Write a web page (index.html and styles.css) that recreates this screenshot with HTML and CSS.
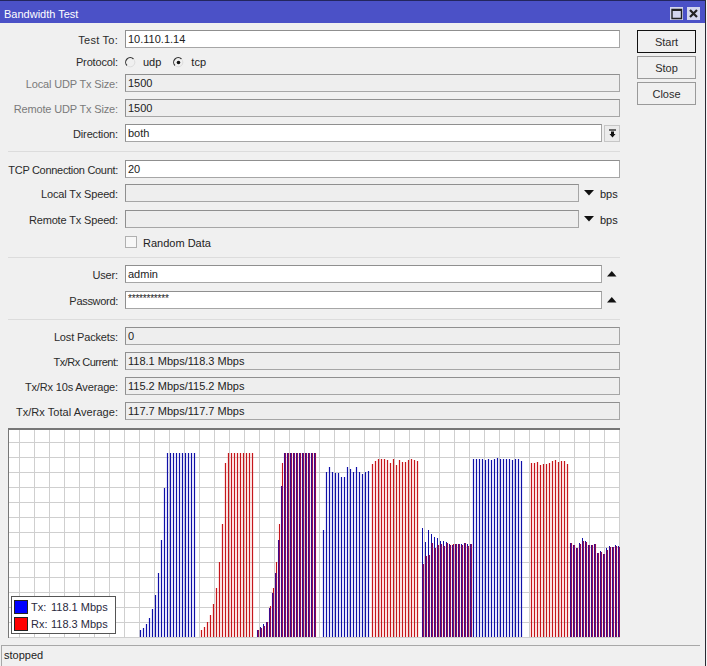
FILE: index.html
```html
<!DOCTYPE html>
<html lang="en">
<head>
<meta charset="utf-8">
<title>Bandwidth Test</title>
<link rel="stylesheet" href="styles.css">
</head>
<body>
<div class="window">
  <header class="titlebar">
    <span class="title">Bandwidth Test</span>
    <div class="win-buttons">
      <span class="win-btn"><svg width="13" height="13" viewBox="0 0 13 13"><path d="M2 2.5H11.5V11.5H2Z" fill="none" stroke="#222" stroke-width="1.4"/><path d="M2 3H11.5" stroke="#222" stroke-width="2"/></svg></span>
      <span class="win-btn"><svg width="13" height="13" viewBox="0 0 13 13"><path d="M3 3L10 10M10 3L3 10" stroke="#222" stroke-width="2.2"/></svg></span>
    </div>
  </header>
  <div class="content">
    <main class="form">
      <section class="group group-a">
        <div class="row"><label class="lbl wide">Test To:</label><div class="field">10.110.1.14</div></div>
        <div class="row row-short"><label class="lbl">Protocol:</label>
          <div class="radios">
            <span class="radio"><svg width="11" height="11" viewBox="0 0 11 11"><path d="M8.5 2A4.3 4.3 0 0 0 2 8.5" fill="none" stroke="#333" stroke-width="1.1"/><path d="M2 8.5A4.3 4.3 0 0 0 8.5 2" fill="none" stroke="#ddd" stroke-width="1"/></svg>udp</span>
            <span class="radio"><svg width="11" height="11" viewBox="0 0 11 11"><path d="M8.5 2A4.3 4.3 0 0 0 2 8.5" fill="none" stroke="#333" stroke-width="1.1"/><path d="M2 8.5A4.3 4.3 0 0 0 8.5 2" fill="none" stroke="#ddd" stroke-width="1"/><circle cx="5.5" cy="5.5" r="1.8" fill="#111"/></svg>tcp</span>
          </div>
        </div>
        <div class="row"><label class="lbl dim">Local UDP Tx Size:</label><div class="field off">1500</div></div>
        <div class="row"><label class="lbl dim">Remote UDP Tx Size:</label><div class="field off">1500</div></div>
        <div class="row"><label class="lbl">Direction:</label><div class="field tight">both</div>
          <span class="drop"><svg width="9" height="9" viewBox="0 0 9 9"><path d="M1 1H8" stroke="#111" stroke-width="1.2"/><path d="M1.5 5H3V2.5H6V5H7.5L4.5 8.5Z" fill="#111"/></svg></span>
        </div>
      </section>
      <hr class="sep">
      <section class="group group-b">
        <div class="row row-lead"><label class="lbl narrow">TCP Connection Count:</label><div class="field">20</div></div>
        <div class="row"><label class="lbl">Local Tx Speed:</label><div class="field off"></div>
          <svg class="arrow-down" width="11" height="6" viewBox="0 0 11 6"><path d="M0 0H10L5 5.5Z" fill="#111"/></svg><span class="unit">bps</span></div>
        <div class="row"><label class="lbl">Remote Tx Speed:</label><div class="field off"></div>
          <svg class="arrow-down" width="11" height="6" viewBox="0 0 11 6"><path d="M0 0H10L5 5.5Z" fill="#111"/></svg><span class="unit">bps</span></div>
        <div class="row row-short"><span class="lbl"></span><span class="check"></span><span class="check-text">Random Data</span></div>
      </section>
      <hr class="sep sep-b">
      <section class="group group-b">
        <div class="row"><label class="lbl">User:</label><div class="field tight">admin</div>
          <svg class="arrow-up" width="10" height="6" viewBox="0 0 10 6"><path d="M0 5.5H9.5L4.8 0Z" fill="#111"/></svg></div>
        <div class="row"><label class="lbl narrow">Password:</label><div class="field tight stars">***********</div>
          <svg class="arrow-up" width="10" height="6" viewBox="0 0 10 6"><path d="M0 5.5H9.5L4.8 0Z" fill="#111"/></svg></div>
      </section>
      <hr class="sep sep-c">
      <section class="group group-a">
        <div class="row"><label class="lbl">Lost Packets:</label><div class="field off">0</div></div>
        <div class="row"><label class="lbl tightest">Tx/Rx Current:</label><div class="field off">118.1 Mbps/118.3 Mbps</div></div>
        <div class="row"><label class="lbl">Tx/Rx 10s Average:</label><div class="field off">115.2 Mbps/115.2 Mbps</div></div>
        <div class="row"><label class="lbl plain">Tx/Rx Total Average:</label><div class="field off">117.7 Mbps/117.7 Mbps</div></div>
      </section>
      <div class="chart">
        <svg id="graph" class="graph" width="612" height="210" viewBox="8 428 612 210">
          <defs>
            <pattern id="grid" x="4" y="427" width="15" height="15" patternUnits="userSpaceOnUse">
              <path d="M0.5 0V15M0 0.5H15" stroke="#cfcfcf" stroke-width="1" fill="none"/>
            </pattern>
          </defs>
          <rect x="8" y="428" width="612" height="210" fill="#fff"/>
          <rect x="8" y="428" width="612" height="210" fill="url(#grid)"/>
          <g id="bars"></g>
        </svg>
        <div class="legend">
          <div class="legend-row"><span class="swatch tx"></span><span class="legend-key">Tx:</span><span>118.1 Mbps</span></div>
          <div class="legend-row"><span class="swatch rx"></span><span class="legend-key">Rx:</span><span>118.3 Mbps</span></div>
        </div>
      </div>
    </main>
    <aside class="actions">
      <button class="btn primary">Start</button>
      <button class="btn">Stop</button>
      <button class="btn">Close</button>
    </aside>
  </div>
  <footer class="status"><span class="status-cell">stopped</span></footer>
</div>
<script src="chart.js"></script>
</body>
</html>
```
FILE: styles.css
```css
* { box-sizing: border-box; }
html, body { margin: 0; padding: 0; background: #f4f4f4; }
body { width: 707px; height: 666px; overflow: hidden; font: 11px/1 "Liberation Sans", Arial, sans-serif; color: #222; }
.window { width: 706px; height: 666px; display: flex; flex-direction: column; background: #f0f0f0; border-right: 1px solid #2a2a33; }
.titlebar { height: 23px; flex: none; display: flex; align-items: center; justify-content: space-between; background: #4b51c7; border-top: 1px solid #23265e; padding: 0 5px 0 4px; color: #fff; }
.title { font-size: 11px; padding-top: 4px; }
.win-buttons { display: flex; gap: 4px; padding-top: 3px; }
.win-btn { width: 13px; height: 13px; background: #d4d6ee; display: block; }
.win-btn svg { display: block; }
.content { flex: 1; display: flex; padding: 7px 0 0 8px; min-height: 0; }
.form { width: 612px; flex: none; display: flex; flex-direction: column; }
.group { display: flex; flex-direction: column; }
.group-a { gap: 7px; }
.group-b { gap: 8px; }
.row { display: flex; align-items: center; height: 18px; flex: none; }
.row-short { height: 12px; }
.row-lead { margin-bottom: -2px; }
.lbl { width: 110px; margin-right: 7px; padding-top: 2px; flex: none; white-space: nowrap; color: #2b2b2b; display: flex; justify-content: flex-end; letter-spacing: -0.15px; }
.lbl.wide { letter-spacing: 0.25px; }
.lbl.plain { letter-spacing: 0.05px; }
.lbl.narrow { letter-spacing: -0.3px; }
.lbl.tightest { letter-spacing: -0.5px; }
.dim { color: #7a7a7a; }
.field { flex: 1; height: 18px; background: #fff; border: 1px solid #a6a6a6; border-top-color: #8f8f8f; border-left-color: #8f8f8f; padding: 0 2px; line-height: 17px; color: #222; white-space: nowrap; }
.field.off { background: #eeeeee; }
.field.tight { flex: none; width: 477px; }
.stars { font-size: 10px; line-height: 13px; letter-spacing: -0.2px; }
.radios { display: flex; gap: 12px; padding-top: 2px; }
.radio { display: inline-flex; align-items: center; gap: 7px; }
.radio svg { display: block; }
.drop { width: 17px; height: 17px; margin-left: 2px; background: #ebebeb; border: 1px solid #c6c6c6; display: flex; align-items: center; justify-content: center; }
.drop svg { display: block; }
.arrow-down { margin-left: 5px; flex: none; }
.arrow-up { margin-left: 5px; margin-right: 4px; flex: none; }
.unit { margin-left: 5px; padding-top: 2px; width: 20px; flex: none; }
.check { width: 12px; height: 12px; background: #f7f7f7; border: 1px solid #b0b0b0; flex: none; }
.check-text { margin-left: 6px; padding-top: 2px; }
.sep { height: 1px; margin: 9px 0 8px; border: 0; background: #dcdcdc; flex: none; }
.sep-b { margin: 9px 0 7px; }
.sep-c { margin: 10px 0 7px; }
.chart { position: relative; width: 612px; height: 210px; margin-top: 8px; flex: none; }
.graph { display: block; }
.chart::before { content: ""; position: absolute; left: 0; top: 0; right: 0; height: 2px; background: #777; }
.chart::after { content: ""; position: absolute; left: 0; top: 0; bottom: 0; width: 1px; background: #777; }
.legend { position: absolute; left: 3px; top: 168px; width: 105px; height: 38px; background: #fff; border: 1px solid #555; padding: 3px 2px; display: flex; flex-direction: column; gap: 3px; color: #2a2a40; }
.legend-row { display: flex; align-items: center; height: 14px; }
.legend-key { width: 20px; }
.swatch { width: 14px; height: 14px; margin-right: 3px; border: 1px solid #222; }
.swatch.tx { background: #0000ff; }
.swatch.rx { background: #ff0000; }
.actions { margin-left: 17px; width: 59px; display: flex; flex-direction: column; gap: 3px; }
.btn { width: 59px; height: 23px; padding: 0; background: #f0f0f0; border: 1px solid #9a9a9a; font: 11px "Liberation Sans", Arial, sans-serif; color: #2b2b2b; }
.btn.primary { border-color: #111; }
.status { height: 21px; flex: none; margin-left: 1px; padding-right: 5px; }
.status-cell { display: block; height: 21px; border-top: 1px solid #a8a8a8; border-left: 1px solid #a8a8a8; padding: 4px 0 0 2px; color: #222; }
```
FILE: chart.js
```js
// Bar series of the bandwidth graph: each burst is [first x, tx tops, rx tops].
var B = "#1010a6", R = "#c4161c";
function fill(n, v) { var a = []; for (var i = 0; i < n; i++) a.push(v); return a; }
var bursts = [
  [140, [630,628,624,618,609,595,573,540,488].concat(fill(10,453)), null],
  [201, null, [630,627,622,615,604,588,562,524,463].concat(fill(9,453))],
  [257, [630,627,624,622,608,593,573,540,486].concat(fill(11,453)),
        [630,628,626,622,606,588,562,524,463].concat(fill(11,453))],
  [323, [530,472,467,472,473,473,477,477,467,469,472,467,472,474,472,471], null],
  [372, null, [464,461,459,459,459,460,463,459,465,460,462,462,460,459,460,461]],
  [422, [528,542,530,534,537,538,541,541,542,544,545,544,544,544,543,544,544],
        [564,556,555,543,548,545,544,546,543,545,544,544,544,545,543,546,544]],
  [473, [459,459,459,459,460,459,460,459,458,459,459,459,459,460,459,459,461], null],
  [531, null, [463,463,462,465,464,464,463,461,460,462,461,461,464]],
  [570, [543,545,548,543,538,541,545,545,544,553,551,554,548,546,547,545,546],
        [543,545,548,544,541,542,545,545,544,553,552,554,550,547,547,546,547]]
];
var NS = "http://www.w3.org/2000/svg", g = document.getElementById("bars");
function add(d, color, w, op) {
  var p = document.createElementNS(NS, "path");
  p.setAttribute("d", d); p.setAttribute("stroke", color);
  p.setAttribute("stroke-width", w); p.setAttribute("fill", "none");
  p.setAttribute("stroke-opacity", op);
  g.appendChild(p);
}
function bars(x0, tops, off) {
  return tops.map(function (t, i) { return "M" + (x0 + i * 3 + off) + " 637V" + t; }).join("");
}
bursts.forEach(function (b) {
  var x = b[0], tx = b[1], rx = b[2];
  if (tx && rx) {
    var shared = tx.map(function (t, i) { return Math.max(t, rx[i]); });
    add(bars(x, rx, 1), "#ff6060", 3, 0.1);
    add(bars(x, rx, 1.5), R, 1, 1);
    add(bars(x, tx, 0.5), B, 1, 1);
    add(bars(x, shared, 0.5), "#3e0a8c", 1, 1);
    add(bars(x, shared, 1.5), "#8f0d50", 1, 1);
  } else if (tx) {
    add(bars(x, tx, 0.5), "#6a6aff", 3, 0.08);
    add(bars(x, tx, 0.5), B, 1.1, 1);
  } else {
    add(bars(x, rx, 0.5), "#ff5050", 3, 0.1);
    add(bars(x, rx, 0.5), R, 1.1, 1);
  }
});
```
